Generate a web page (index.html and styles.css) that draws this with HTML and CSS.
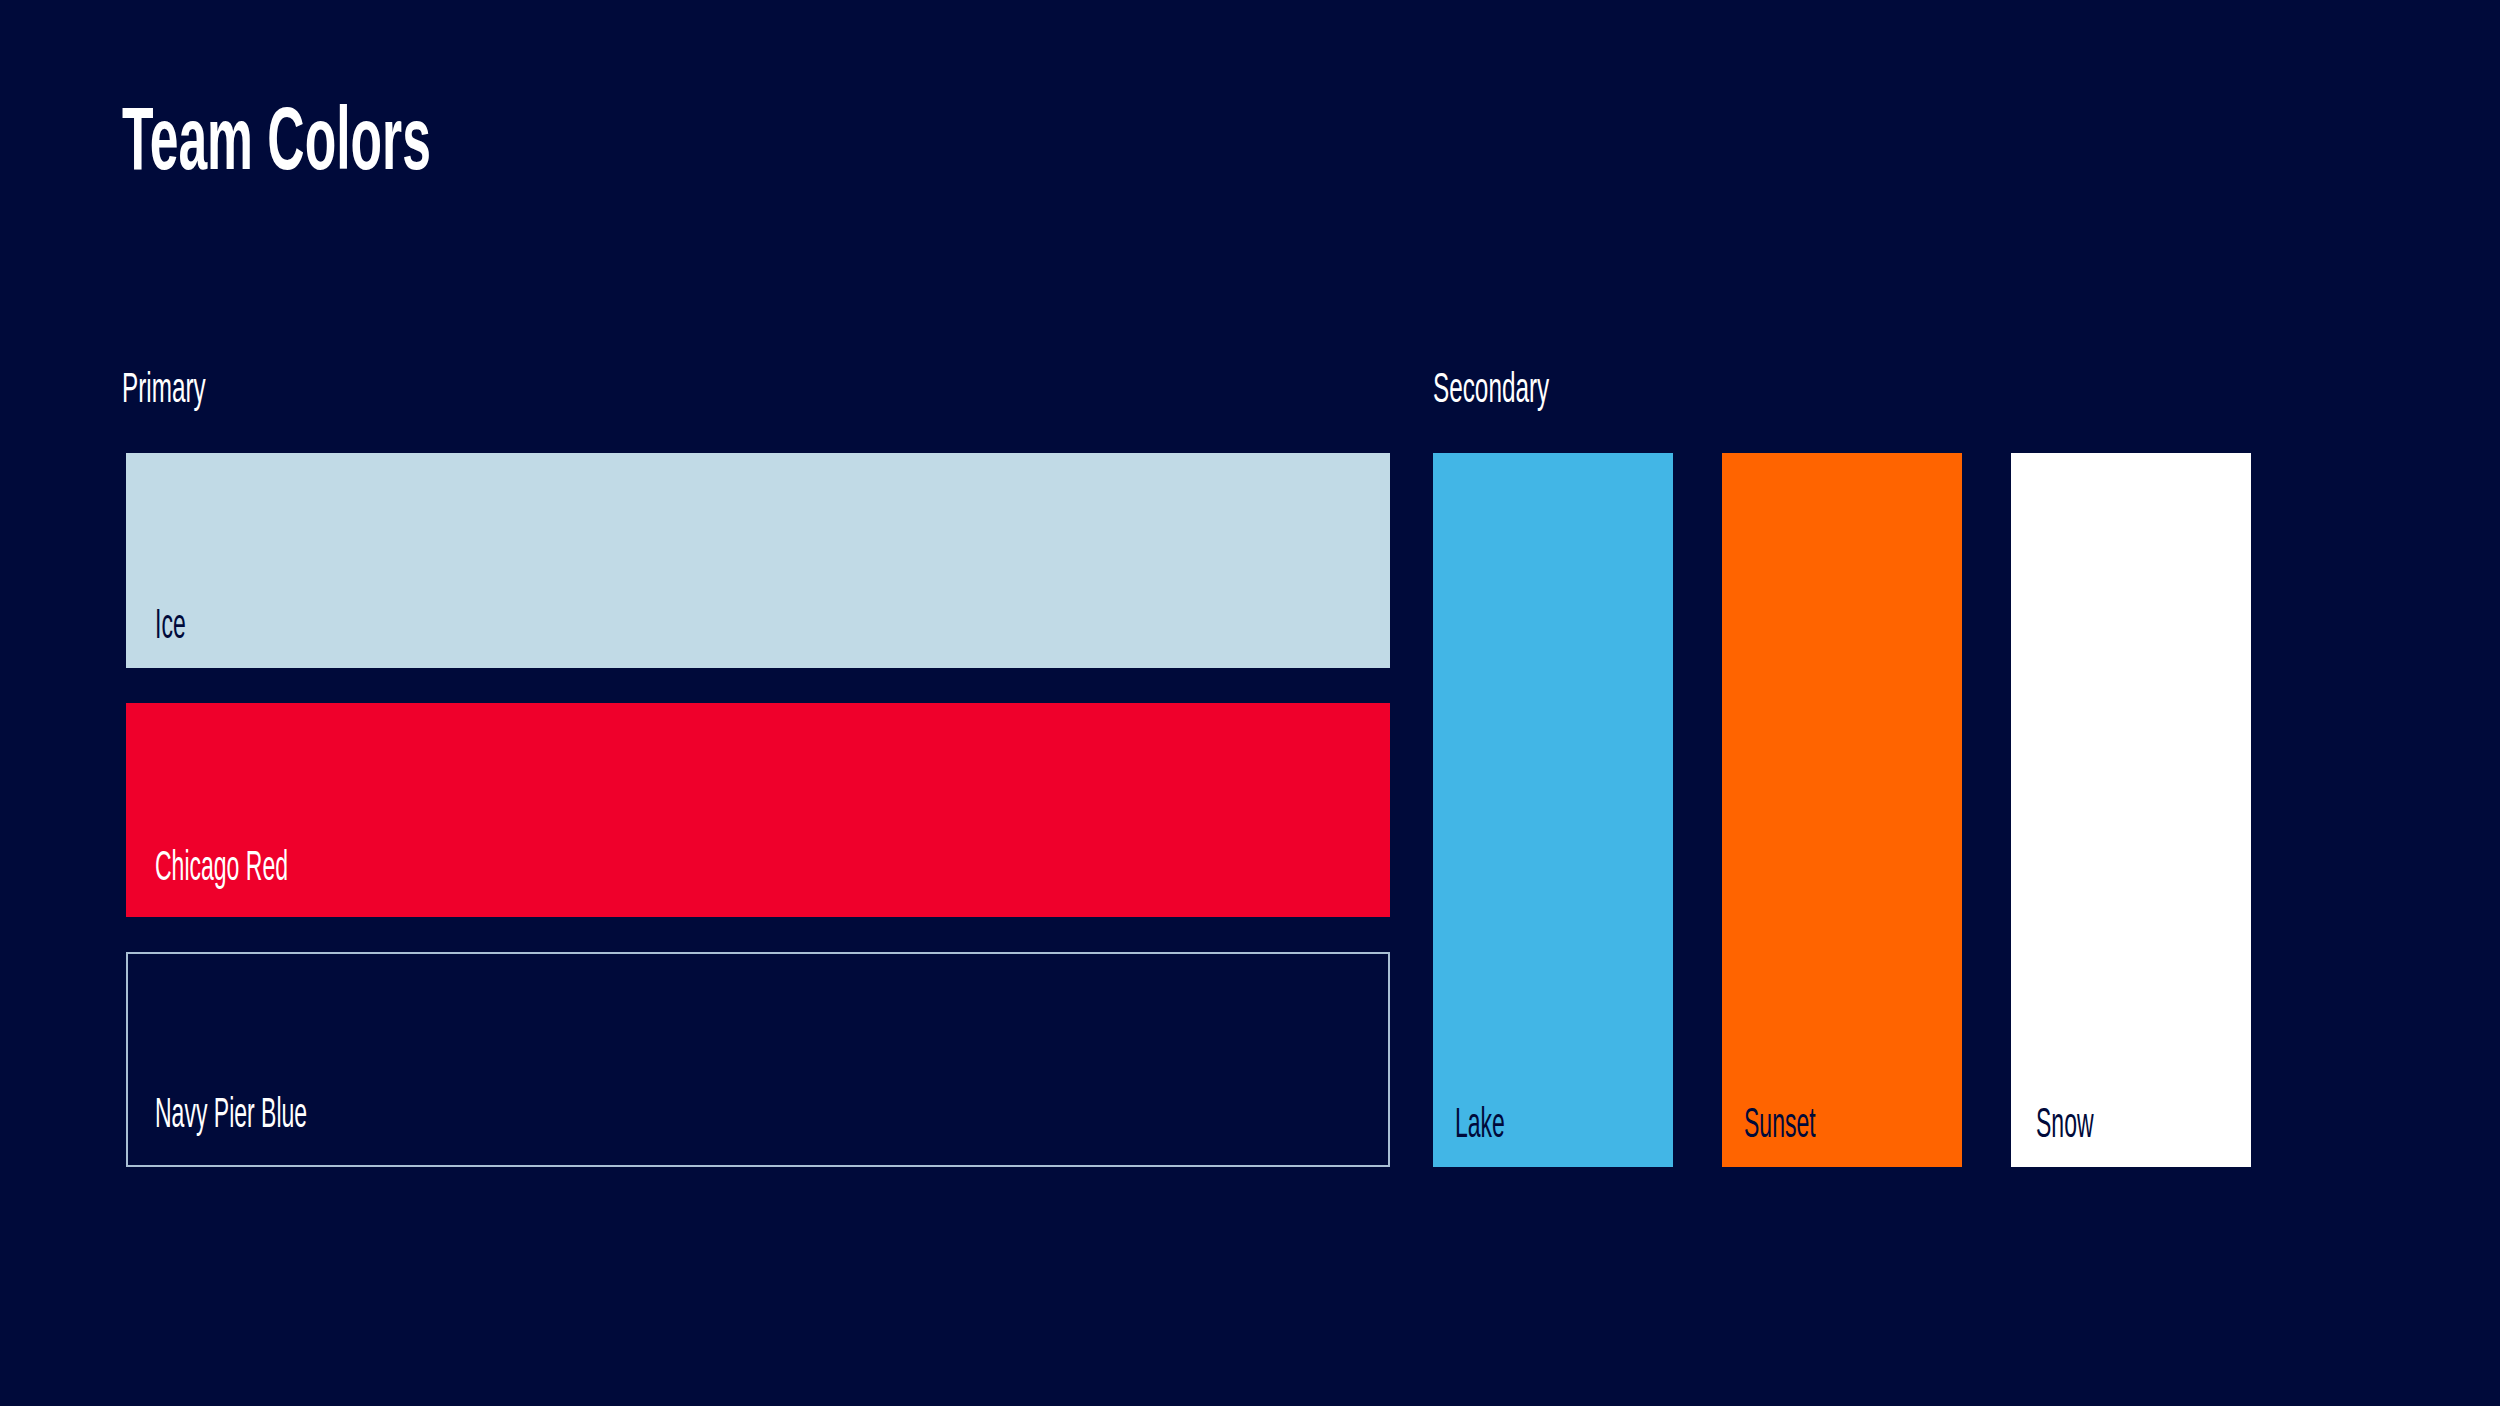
FILE: index.html
```html
<!DOCTYPE html>
<html lang="en">
<head>
<meta charset="utf-8">
<title>Team Colors</title>
<link rel="stylesheet" href="styles.css">
</head>
<body>
<main class="page">
  <h1 class="title"><span class="squeeze squeeze--title">Team Colors</span></h1>
  <section class="palette">
    <div class="group group--primary">
      <h2 class="group-label group-label--primary"><span class="squeeze squeeze--heading">Primary</span></h2>
      <div class="stack">
        <div class="swatch swatch--ice"><span class="squeeze">Ice</span></div>
        <div class="swatch swatch--red"><span class="squeeze">Chicago Red</span></div>
        <div class="swatch swatch--navy"><span class="squeeze">Navy Pier Blue</span></div>
      </div>
    </div>
    <div class="group group--secondary">
      <h2 class="group-label"><span class="squeeze squeeze--heading">Secondary</span></h2>
      <div class="columns">
        <div class="tile tile--lake"><span class="squeeze">Lake</span></div>
        <div class="tile tile--sunset"><span class="squeeze">Sunset</span></div>
        <div class="tile tile--snow"><span class="squeeze">Snow</span></div>
      </div>
    </div>
  </section>
</main>
</body>
</html>
```

FILE: styles.css
```css
html, body {
  margin: 0;
  padding: 0;
  background: #000a3a;
}

body {
  width: 2500px;
  height: 1406px;
  overflow: hidden;
  font-family: "Liberation Sans", Arial, sans-serif;
  color: #ffffff;
}

.page {
  padding: 94px 0 0 122px;
}

.squeeze {
  display: inline-block;
  transform: scaleX(0.535);
  transform-origin: left center;
  white-space: nowrap;
}

.squeeze--title {
  transform: scaleX(0.58);
}

.squeeze--heading {
  transform: scaleX(0.565);
}

.title {
  margin: 0;
  font-size: 89px;
  line-height: 1;
  font-weight: 700;
}

.palette {
  margin-top: 183px;
  display: flex;
  gap: 43px;
  padding-left: 4px;
}

.group {
  display: flex;
  flex-direction: column;
}

.group--primary {
  width: 1264px;
}

.group-label {
  margin: 0 0 44px 0;
  font-size: 43px;
  line-height: 1;
  font-weight: 400;
  color: #ffffff;
}

.group-label--primary {
  margin-left: -4px;
}

.stack {
  display: flex;
  flex-direction: column;
  gap: 35px;
}

.swatch {
  box-sizing: border-box;
  height: 214.5px;
  display: flex;
  flex-direction: column;
  justify-content: flex-end;
  padding-left: 29px;
  font-size: 43px;
  line-height: 1;
}

.swatch--ice {
  background: #c1dae6;
  color: #000a3a;
  padding-bottom: 23px;
}

.swatch--red {
  background: #ef002b;
  color: #ffffff;
  padding-bottom: 30px;
}

.swatch--navy {
  background: #000a3a;
  border: 2px solid #a9bfd4;
  color: #ffffff;
  padding-left: 27px;
  padding-bottom: 31px;
}

.columns {
  display: flex;
  gap: 49px;
  height: 713.5px;
}

.tile {
  box-sizing: border-box;
  width: 240px;
  display: flex;
  flex-direction: column;
  justify-content: flex-end;
  padding: 0 0 23px 22px;
  font-size: 43px;
  line-height: 1;
  color: #000a3a;
}

.tile--lake {
  background: #42b6e6;
}

.tile--sunset {
  background: #ff6400;
}

.tile--snow {
  background: #ffffff;
  padding-left: 25px;
}
```
